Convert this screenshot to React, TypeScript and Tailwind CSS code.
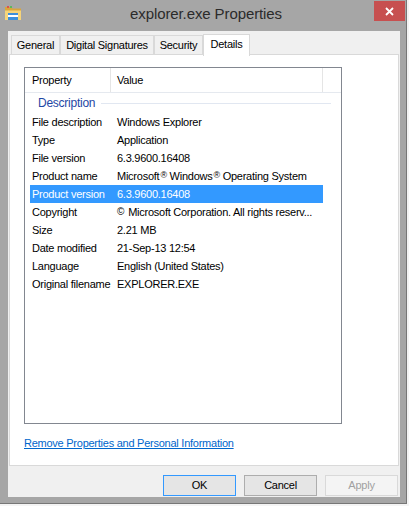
import React from 'react';

const font = { fontFamily: '"Liberation Sans", Arial, sans-serif' };

type Row = { name: string; value: React.ReactNode; selected?: boolean };

const Reg = ({ mark }: { mark: string }) => (
  <span className="relative -top-[2px] text-[9px] ml-px">{mark}</span>
);

const rows: Row[] = [
  { name: 'File description', value: 'Windows Explorer' },
  { name: 'Type', value: 'Application' },
  { name: 'File version', value: '6.3.9600.16408' },
  {
    name: 'Product name',
    value: (
      <>
        Microsoft<Reg mark="®" /> Windows<Reg mark="®" /> Operating System
      </>
    ),
  },
  { name: 'Product version', value: '6.3.9600.16408', selected: true },
  {
    name: 'Copyright',
    value: (
      <>
        <span className="relative -top-[1px] text-[10px] mr-[4px]">©</span>
        Microsoft Corporation. All rights reserv...
      </>
    ),
  },
  { name: 'Size', value: '2.21 MB' },
  { name: 'Date modified', value: '21-Sep-13 12:54' },
  { name: 'Language', value: 'English (United States)' },
  { name: 'Original filename', value: 'EXPLORER.EXE' },
];

const tabs = [
  { label: 'General', w: 'w-[49px]' },
  { label: 'Digital Signatures', w: 'w-[94px]' },
  { label: 'Security', w: 'w-[49px]' },
];

// small explorer folder with a window pane inside
function FolderIcon() {
  return (
    <svg width="18" height="17" viewBox="0 0 18 17">
      <path d="M1 2h6l1.5 1.5H17V15H1z" fill="#d9a53c" />
      <rect x="3" y="1" width="2" height="2" fill="#d9534f" />
      <rect x="6" y="1" width="2" height="2" fill="#5cb85c" />
      <path d="M1 5.5h16V15H1z" fill="#f5d47a" />
      <rect x="4" y="8" width="10" height="7" fill="#ffffff" />
      <rect x="4" y="8" width="10" height="2" fill="#3d8fdb" />
      <rect x="4" y="12" width="10" height="3" fill="#3d8fdb" />
    </svg>
  );
}

export default function App() {
  return (
    <div className="w-[409px] h-[506px] bg-[#f4f4f4]" style={font}>
      <div className="w-[407px] h-[504px] bg-[#a6a6a6] border-r border-b border-[#777777] flex flex-col">
        {/* Title bar */}
        <div className="h-[31px] flex items-start">
          <div className="w-[30px] pt-[5px] pl-[4px]">
            <FolderIcon />
          </div>
          <div className="flex-1 text-center text-[15px] leading-[28px] text-[#2b2b2b] tracking-[-0.1px] pl-[8px]">
            explorer.exe Properties
          </div>
          <div className="w-[31px] h-[20px] mt-px mr-[1px] bg-[#c75050] flex items-center justify-center">
            <svg width="9" height="9" viewBox="0 0 9 9">
              <path d="M1 1l7 7M8 1l-7 7" stroke="#fff" strokeWidth="1.8" />
            </svg>
          </div>
        </div>

        {/* Client area */}
        <div className="ml-[8px] w-[392px] h-[466px] bg-[#f0f0f0] flex flex-col text-[11px] tracking-[-0.25px] text-black">
          {/* Tabs */}
          <div className="flex items-end h-[22px] mt-[2px] pl-[3px]">
            {tabs.map((t) => (
              <div
                key={t.label}
                className={`${t.w} h-[19px] border border-b-0 border-[#d9d9d9] bg-[#f0f0f0] flex items-center justify-center mb-[1px]`}
              >
                {t.label}
              </div>
            ))}
            <div className="relative z-10 w-[47px] h-[22px] -mb-px border border-b-0 border-[#d9d9d9] bg-white flex items-center justify-center pb-[2px]">
              Details
            </div>
          </div>

          {/* Tab panel */}
          <div className="ml-px w-[390px] h-[412px] -mt-px border border-[#d9d9d9] bg-white flex flex-col">
            {/* List view */}
            <div className="ml-[14px] mt-[12px] w-[318px] h-[357px] border border-[#828790] bg-white flex flex-col">
              <div className="h-[25px] flex border-b border-[#e5e9ef]">
                <div className="w-[86px] pl-[7px] border-r border-[#e5e5e5] flex items-center">
                  Property
                </div>
                <div className="w-[212px] pl-[6px] border-r border-[#e5e5e5] flex items-center">
                  Value
                </div>
              </div>

              {/* Group header */}
              <div className="h-[20px] flex items-center pl-[13px] pr-[10px]">
                <span className="text-[#1e47a5] text-[12px]">Description</span>
                <div className="flex-1 ml-[6px] h-px bg-[#e1e7f1]" />
              </div>

              {rows.map((r) => (
                <div
                  key={r.name}
                  className={`ml-[5px] w-[293px] h-[18px] flex items-center ${
                    r.selected ? 'bg-[#3399ff] text-white' : ''
                  }`}
                >
                  <div className="w-[87px] pl-[2px] whitespace-nowrap">{r.name}</div>
                  <div className="whitespace-nowrap">{r.value}</div>
                </div>
              ))}
            </div>

            <div className="ml-[14px] mt-[11px]">
              <span className="text-[#0066cc] underline">
                Remove Properties and Personal Information
              </span>
            </div>
          </div>

          {/* Dialog buttons */}
          <div className="flex justify-end gap-[8px] mt-[9px] pr-[2px]">
            <div className="w-[73px] h-[21px] border border-[#3399ff] bg-[#e5e5e5] flex items-center justify-center">
              OK
            </div>
            <div className="w-[73px] h-[21px] border border-[#adadad] bg-[#e5e5e5] flex items-center justify-center">
              Cancel
            </div>
            <div className="w-[73px] h-[21px] border border-[#d9d9d9] bg-[#f4f4f4] text-[#a0a0a0] flex items-center justify-center">
              Apply
            </div>
          </div>
        </div>
      </div>
    </div>
  );
}
